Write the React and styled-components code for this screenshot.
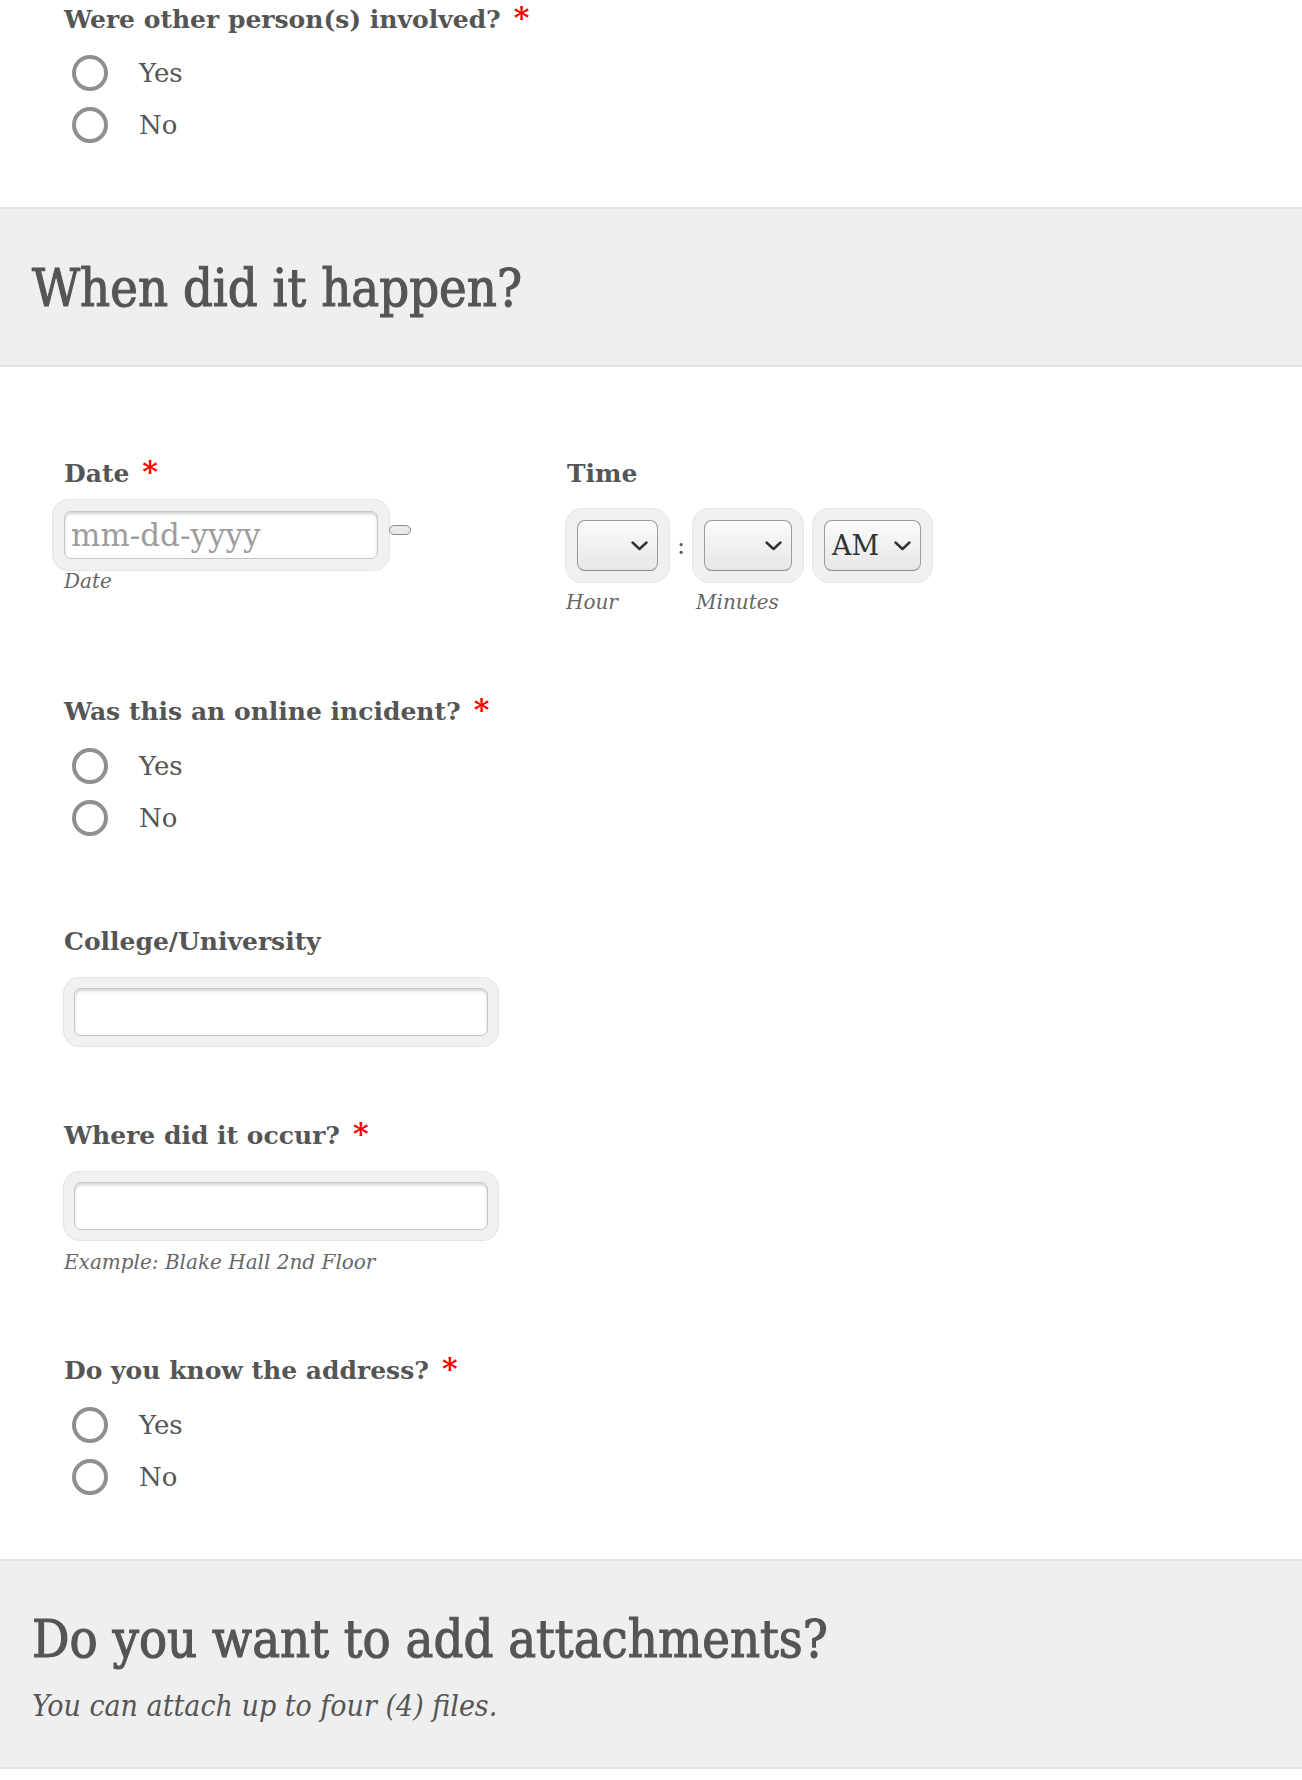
import React from "react";
import styled, { createGlobalStyle } from "styled-components";

const GlobalStyle = createGlobalStyle`
  body {
    margin: 0;
    background: #fff;
    font-family: "DejaVu Serif", "Liberation Serif", serif;
    color: #555;
  }
`;

const Page = styled.div`
  width: 1302px;
  height: 1780px;
  overflow: hidden;
`;

const Section = styled.div`
  padding: ${(p) => p.pad || "0"};
  padding-left: 64px;
`;

const Band = styled.div`
  background: #efefef;
  border-top: 2px solid #e2e2e2;
  border-bottom: 2px solid #e2e2e2;
  padding: ${(p) => p.pad};
  padding-left: 32px;
  h2 {
    margin: 0;
    font-family: "DejaVu Serif Condensed", "DejaVu Serif", serif;
    font-weight: normal;
    font-size: 52px;
    line-height: 60px;
    color: #555;
    -webkit-text-stroke: 1.1px #555;
  }
  p {
    margin: 19px 0 0;
    font-family: "DejaVu Serif Condensed", "DejaVu Serif", serif;
    font-style: italic;
    font-size: 30px;
    line-height: 36px;
    color: #555;
  }
`;

const Field = styled.div`
  margin-top: ${(p) => p.top || 0}px;
`;

const Label = styled.div`
  font-weight: bold;
  font-size: 25px;
  line-height: 30px;
  height: 30px;
  color: #555;
  span {
    color: #f00;
    font-size: 30px;
    line-height: 0;
    margin-left: 13px;
  }
`;

const RadioList = styled.div`
  margin-top: ${(p) => p.top || 12}px;
  padding-left: 8px;
`;

const RadioRow = styled.label`
  display: flex;
  align-items: center;
  height: 52px;
  font-size: 26px;
  color: #555;
`;

const Circle = styled.span`
  width: 28px;
  height: 28px;
  border: 4px solid #8f8f8f;
  border-radius: 50%;
  background: #fff;
  margin-right: 31px;
`;

const Row = styled.div`
  display: flex;
  align-items: flex-start;
  margin-top: 92px;
`;

const DateCol = styled.div`
  width: 503px;
`;

const Halo = styled.div`
  background: #f1f1f1;
  border: 1px solid #e4e4e4;
  border-radius: 16px;
  padding: ${(p) => p.pad || 10}px;
  width: ${(p) => p.w}px;
  box-sizing: border-box;
  margin-top: ${(p) => p.top || 0}px;
  margin-left: ${(p) => p.left || 0}px;
`;

const TextBox = styled.div`
  height: 48px;
  box-sizing: border-box;
  background: #fff;
  border: 1px solid #c6c6c6;
  border-radius: 7px;
  box-shadow: inset 0 2px 3px rgba(0, 0, 0, 0.18);
  padding: 0 6px;
  font-size: 31px;
  line-height: 46px;
  color: #9d9d9d;
`;

const DateLine = styled.div`
  display: flex;
  align-items: center;
`;

const Pill = styled.span`
  width: 20px;
  height: 8px;
  border: 1.5px solid #8a8a9a;
  background: #e9e9ef;
  border-radius: 6px;
  margin-left: -1px;
`;

const Caption = styled.div`
  font-style: italic;
  font-size: 20px;
  line-height: ${(p) => p.lh || 20}px;
  color: #666;
  margin-top: ${(p) => p.top || 0}px;
  margin-left: ${(p) => p.left || 0}px;
`;

const TimeCol = styled.div`
  margin-left: 0;
`;

const Selects = styled.div`
  display: flex;
  align-items: flex-start;
  margin-top: 19px;
  margin-left: -2px;
`;

const SelectUnit = styled.div`
  display: flex;
  flex-direction: column;
`;

const SelectHalo = styled.div`
  background: #f0f0f0;
  border: 1px solid #e6e6e6;
  border-radius: 17px;
  padding: 11px;
  box-sizing: border-box;
  width: ${(p) => p.w}px;
  height: 75px;
`;

const SelectBox = styled.div`
  height: 51px;
  box-sizing: border-box;
  display: flex;
  align-items: center;
  justify-content: space-between;
  padding: 0 9px 0 7px;
  background: linear-gradient(#fbfbfb, #e7e7e7);
  border: 1.5px solid #9c9c9c;
  border-bottom-color: #8a8a8a;
  border-radius: 8px;
  font-size: 27px;
  color: #333;
`;

const Colon = styled.div`
  width: ${(p) => p.w || 22}px;
  height: 75px;
  display: flex;
  align-items: center;
  justify-content: center;
  font-size: 24px;
  color: #555;
`;

const Chevron = () => (
  <svg width="17" height="10" viewBox="0 0 17 10" style={{ marginLeft: "auto" }}>
    <path d="M1.5 1.5 L8.5 8 L15.5 1.5" fill="none" stroke="#333" strokeWidth="2.4" strokeLinecap="round" strokeLinejoin="round" />
  </svg>
);

const Radios = ({ top }) => (
  <RadioList top={top}>
    <RadioRow>
      <Circle />
      Yes
    </RadioRow>
    <RadioRow>
      <Circle />
      No
    </RadioRow>
  </RadioList>
);

const Select = ({ w, value, caption, capLeft }) => (
  <SelectUnit>
    <SelectHalo w={w}>
      <SelectBox>
        {value}
        <Chevron />
      </SelectBox>
    </SelectHalo>
    <Caption top={7} lh={24} left={capLeft}>
      {caption}
    </Caption>
  </SelectUnit>
);

const App = () => {
  return (
    <Page>
      <GlobalStyle />
      <Section pad="5px 0 56px">
        <Label>
          Were other person(s) involved?<span>*</span>
        </Label>
        <Radios top={12} />
      </Section>

      <Band pad="49px 0 47px">
        <h2>When did it happen?</h2>
      </Band>

      <Section pad="0 0 56px">
        <Row>
          <DateCol>
            <Label>
              Date<span>*</span>
            </Label>
            <DateLine>
              <Halo w={338} top={10} left={-12} pad={11}>
                <TextBox>mm-dd-yyyy</TextBox>
              </Halo>
              <Pill />
            </DateLine>
            <Caption>Date</Caption>
          </DateCol>
          <TimeCol>
            <Label>Time</Label>
            <Selects>
              <Select w={105} caption="Hour" capLeft={1} />
              <Colon>:</Colon>
              <Select w={112} caption="Minutes" capLeft={4} />
              <Colon w={8} />
              <Select w={121} value="AM" />
            </Selects>
          </TimeCol>
        </Row>

        <Field top={83}>
          <Label>
            Was this an online incident?<span>*</span>
          </Label>
          <Radios top={13} />
        </Field>

        <Field top={83}>
          <Label>College/University</Label>
          <Halo w={436} top={20} left={-1}>
            <TextBox />
          </Halo>
        </Field>

        <Field top={74}>
          <Label>
            Where did it occur?<span>*</span>
          </Label>
          <Halo w={436} top={20} left={-1}>
            <TextBox />
          </Halo>
          <Caption top={11}>Example: Blake Hall 2nd Floor</Caption>
        </Field>

        <Field top={84}>
          <Label>
            Do you know the address?<span>*</span>
          </Label>
          <Radios top={13} />
        </Field>
      </Section>

      <Band pad="48px 0 43px">
        <h2>Do you want to add attachments?</h2>
        <p>You can attach up to four (4) files.</p>
      </Band>
    </Page>
  );
};

export default App;
